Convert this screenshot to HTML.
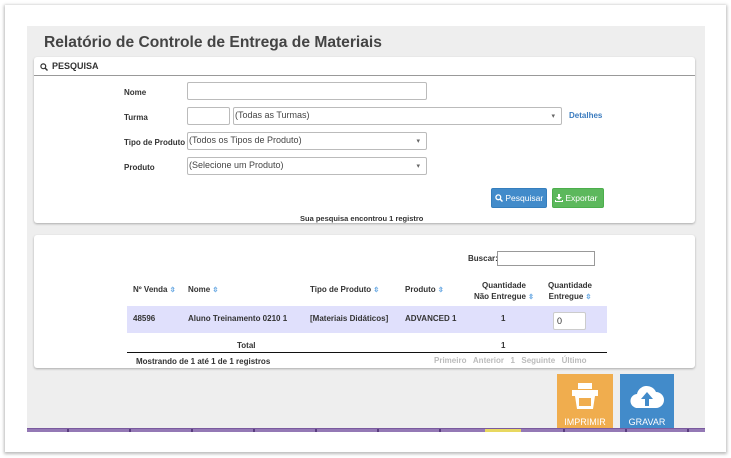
<!DOCTYPE html>
<html><head><meta charset="utf-8"><style>
*{box-sizing:border-box;margin:0;padding:0}
body{width:731px;height:458px;background:#fff;font-family:"Liberation Sans",sans-serif;position:relative;overflow:hidden;color:#333}
.a{position:absolute}
.card{left:5px;top:5px;width:721px;height:447px;background:#fff;box-shadow:0 1px 3px 1px #bbb}
.gray{left:27px;top:26px;width:678px;height:402px;background:#eeeeee}
.panel{background:#fff;border-radius:3px;box-shadow:0 1px 2px #aaa}
.lbl{font-size:8px;font-weight:bold;color:#333}
.in{background:#fff;border:1px solid #bbb;border-radius:2px}
.sel{background:#fff;border:1px solid #bbb;border-radius:2px;font-size:9px;color:#444;padding:2px 1px}
.sel:after{content:"▾";position:absolute;right:6px;top:4px;font-size:7px;color:#666}
.th{font-size:8px;font-weight:bold;color:#333}
.s{color:#5aa0e0;font-size:7px}
.pg{font-size:8px;color:#bbb;font-weight:bold}
.btn{white-space:nowrap;overflow:hidden}
</style></head><body>
<div class="a card"></div>
<div class="a gray"></div>
<div class="a" style="left:44px;top:34px;font-size:15.6px;font-weight:bold;color:#444">Relatório de Controle de Entrega de Materiais</div>

<div class="a panel" style="left:34px;top:57px;width:661px;height:166px"></div>
<div class="a" style="left:34px;top:75px;width:661px;height:1px;background:#999"></div>
<svg class="a" style="left:40px;top:63px" width="8" height="8"><circle cx="3.3" cy="3.3" r="2.4" stroke="#333" stroke-width="1.2" fill="none"/><line x1="5" y1="5" x2="7.5" y2="7.5" stroke="#333" stroke-width="1.4"/></svg>
<div class="a" style="left:52px;top:61px;font-size:9px;font-weight:bold;color:#333">PESQUISA</div>

<div class="a lbl" style="left:124px;top:88px">Nome</div>
<div class="a lbl" style="left:124px;top:113px">Turma</div>
<div class="a lbl" style="left:124px;top:138px">Tipo de Produto</div>
<div class="a lbl" style="left:124px;top:163px">Produto</div>
<div class="a in" style="left:187px;top:82px;width:240px;height:18px"></div>
<div class="a in" style="left:187px;top:107px;width:43px;height:18px"></div>
<div class="a sel" style="left:233px;top:107px;width:329px;height:18px">(Todas as Turmas)</div>
<div class="a" style="left:569px;top:111px;font-size:8px;font-weight:bold;color:#3a7bbf">Detalhes</div>
<div class="a sel" style="left:187px;top:132px;width:240px;height:18px">(Todos os Tipos de Produto)</div>
<div class="a sel" style="left:187px;top:157px;width:240px;height:18px">(Selecione um Produto)</div>

<div class="a btn" style="left:491px;top:188px;width:56px;height:20px;background:#428bca;border-radius:2px;border:1px solid #357ebd;color:#fff;font-size:8.5px;padding:4px 0 0 3px">
<svg width="8" height="8" style="vertical-align:-1px"><circle cx="3.3" cy="3.3" r="2.4" stroke="#fff" stroke-width="1.3" fill="none"/><line x1="5" y1="5" x2="7.5" y2="7.5" stroke="#fff" stroke-width="1.5"/></svg>&nbsp;Pesquisar</div>
<div class="a btn" style="left:552px;top:188px;width:52px;height:20px;background:#5cb85c;border-radius:2px;border:1px solid #4cae4c;color:#fff;font-size:8.5px;padding:4px 0 0 2px">
<svg width="8" height="8" style="vertical-align:-1px"><path d="M3 0h2v3h2L4 6 1 3h2z M0 6h1v1h6V6h1v2H0z" fill="#fff"/></svg>&nbsp;Exportar</div>
<div class="a" style="left:300px;top:214px;font-size:7.5px;font-weight:bold;color:#333">Sua pesquisa encontrou 1 registro</div>

<div class="a panel" style="left:34px;top:235px;width:661px;height:133px"></div>
<div class="a lbl" style="left:468px;top:254px">Buscar:</div>
<div class="a" style="left:497px;top:251px;width:98px;height:15px;border:1px solid #999;background:#fff"></div>

<div class="a th" style="left:133px;top:285px">Nº Venda <span class="s">⇳</span></div>
<div class="a th" style="left:188px;top:285px">Nome <span class="s">⇳</span></div>
<div class="a th" style="left:310px;top:285px">Tipo de Produto <span class="s">⇳</span></div>
<div class="a th" style="left:405px;top:285px">Produto <span class="s">⇳</span></div>
<div class="a th" style="left:468px;top:280px;width:72px;text-align:center;line-height:11px">Quantidade<br>Não Entregue <span class="s">⇳</span></div>
<div class="a th" style="left:540px;top:280px;width:60px;text-align:center;line-height:11px">Quantidade<br>Entregue <span class="s">⇳</span></div>

<div class="a" style="left:127px;top:306px;width:480px;height:27px;background:#e0e0fc"></div>
<div class="a th" style="left:133px;top:314px">48596</div>
<div class="a th" style="left:188px;top:314px">Aluno Treinamento 0210 1</div>
<div class="a th" style="left:310px;top:314px">[Materiais Didáticos]</div>
<div class="a th" style="left:405px;top:314px">ADVANCED 1</div>
<div class="a th" style="left:501px;top:314px">1</div>
<div class="a" style="left:553px;top:312px;width:33px;height:18px;background:#fff;border:1px solid #ccc;border-radius:2px;font-size:9px;padding:3px 3px">0</div>

<div class="a th" style="left:237px;top:341px">Total</div>
<div class="a th" style="left:501px;top:341px">1</div>
<div class="a" style="left:127px;top:352px;width:480px;height:1px;background:#111"></div>
<div class="a th" style="left:136px;top:357px">Mostrando de 1 até 1 de 1 registros</div>
<div class="a pg" style="left:434px;top:356px;word-spacing:1px">Primeiro &nbsp;Anterior &nbsp;1 &nbsp;Seguinte &nbsp;Último</div>

<div class="a" style="left:557px;top:374px;width:56px;height:56px;background:#f0ad4e"></div>
<svg class="a" style="left:570px;top:383px" width="30" height="28"><rect x="8" y="0" width="14" height="6" fill="#fff"/><rect x="2" y="7" width="26" height="6" fill="#fff"/><path d="M5 13h20l-2 13H7z" fill="#fff"/><rect x="9" y="15" width="12" height="8" fill="#f0ad4e"/></svg>
<div class="a" style="left:557px;top:417px;width:56px;text-align:center;color:#fff;font-size:9px">IMPRIMIR</div>
<div class="a" style="left:620px;top:374px;width:54px;height:56px;background:#428bca"></div>
<svg class="a" style="left:630px;top:384px" width="34" height="26"><path d="M8 24a7 7 0 0 1-1-14a10 10 0 0 1 19-2a8 8 0 0 1 0 16z" fill="#fff"/><path d="M17 8l-6 7h4v7h4v-7h4z" fill="#428bca"/></svg>
<div class="a" style="left:620px;top:417px;width:54px;text-align:center;color:#fff;font-size:9px">GRAVAR</div>

<div class="a" style="left:27px;top:428px;width:678px;height:4px;background:#7a5a9e"></div>
<div class="a" style="left:27px;top:429px;width:678px;height:3px;background:repeating-linear-gradient(90deg,#9479b5 0 40px,#5a3d80 40px 42px,#9479b5 42px 62px)"></div>
<div class="a" style="left:485px;top:429px;width:36px;height:3px;background:#e8d860"></div>
</body></html>
